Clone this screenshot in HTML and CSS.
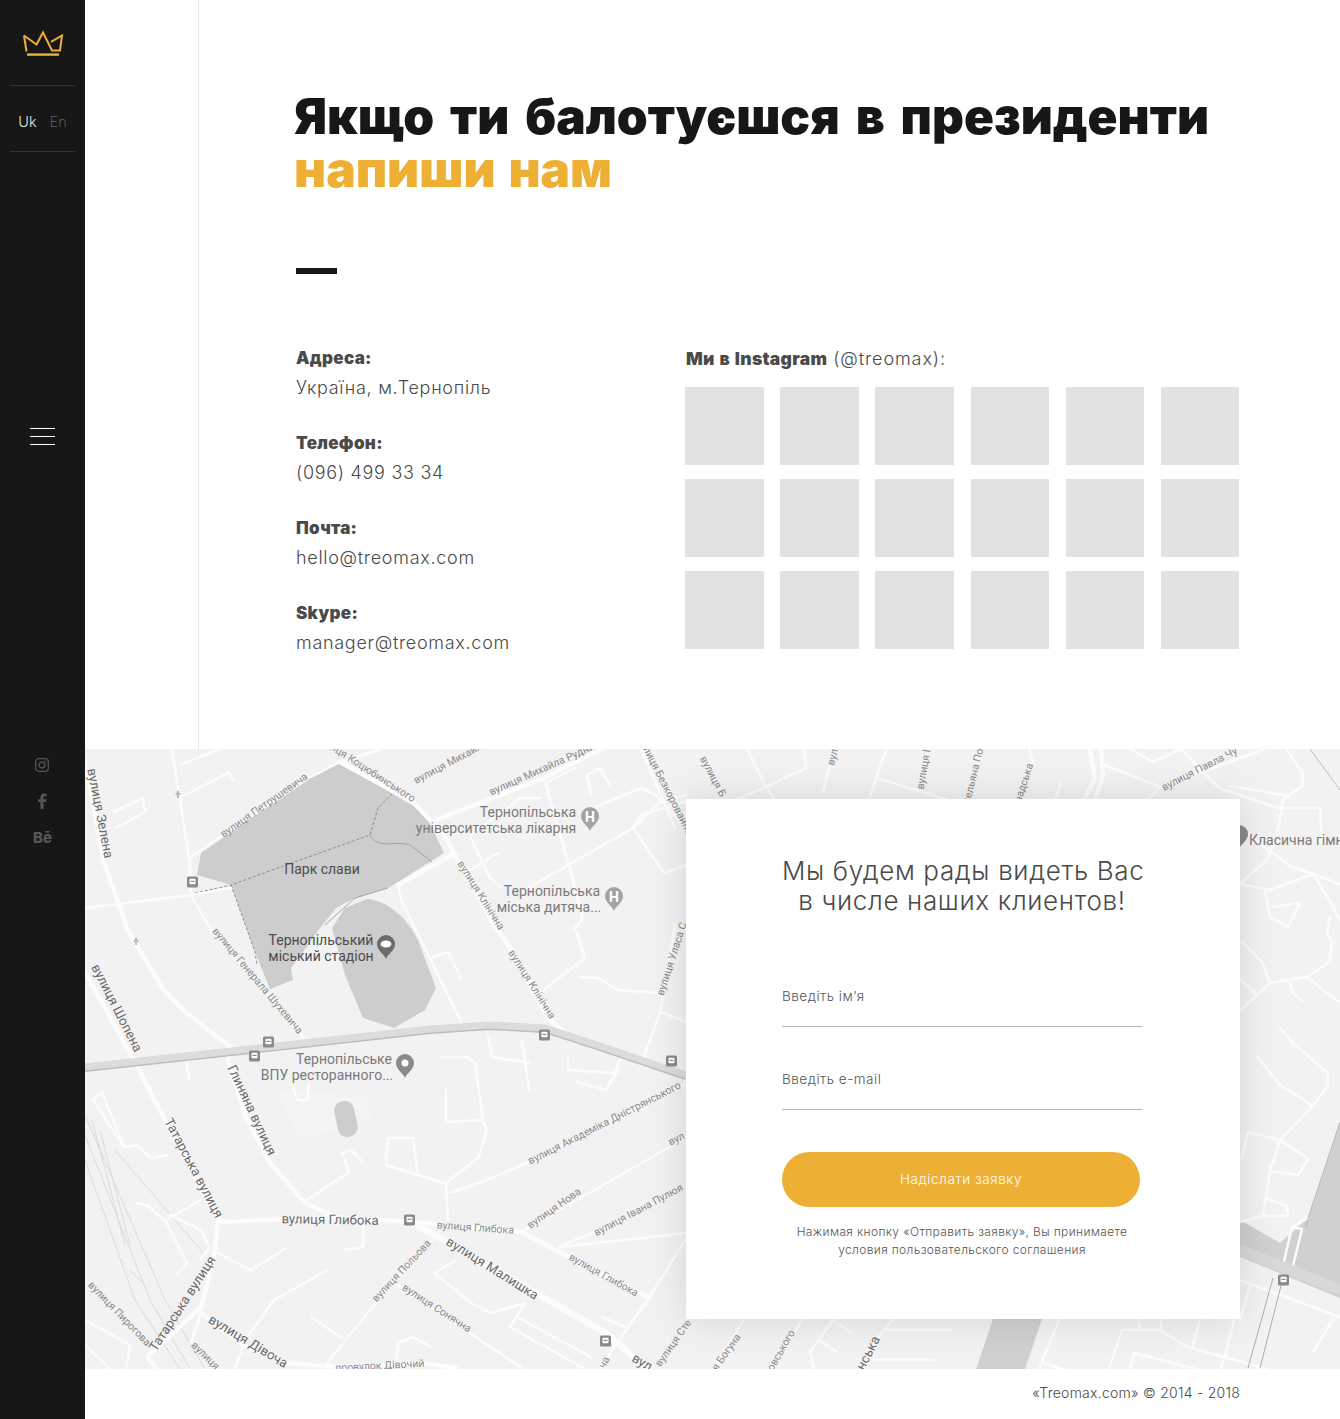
FILE: index.html
```html
<!DOCTYPE html>
<html lang="uk">
<head>
<meta charset="utf-8">
<title>Treomax</title>
<link rel="stylesheet" href="styles.css">
</head>
<body>
<div class="page">
  <aside class="sidebar">
    <div class="logo">
      <svg class="crown" viewBox="22 30 42 27" width="42" height="27" fill="none" stroke="#eeb034" stroke-width="2">
        <path d="M24 35.500 L36.500 44.500 L43 32.500 L52 50.500 H60 L62 35.500 L51 41.800"/>
        <path d="M24 35.500 L26.500 51.500"/>
        <path d="M27 54.600 H59" stroke-width="2.400"/>
      </svg>
    </div>
    <div class="lang"><span class="lang-on">Uk</span><span class="lang-off">En</span></div>
    <button class="burger" aria-label="Меню"><i></i><i></i><i></i></button>
    <div class="social">
      <svg class="soc-ig" viewBox="0 0 14 14" width="14" height="14" fill="none" stroke="#555" stroke-width="1.300"><rect x=".7" y=".7" width="12.600" height="12.600" rx="3.200"/><circle cx="7" cy="7" r="3"/><circle cx="10.600" cy="3.400" r=".6" fill="#555" stroke="none"/></svg>
      <svg class="soc-fb" viewBox="0 0 10 16" width="10" height="16"><path fill="#555" d="M6.500 16V9h2.600l.4-2.800h-3V4.500c0-.8.3-1.300 1.400-1.300h1.600V.7C9.200.6 8.300.5 7.300.5 5 .5 3.500 1.900 3.500 4.200v2H1V9h2.500v7z"/></svg>
      <span class="soc-be">Bē</span>
    </div>
  </aside>

  <main class="main">
    <section class="top">
      <div class="rail"></div>
      <div class="content">
        <h1 class="title">Якщо ти балотуєшся в президенти<br><span class="accent">напиши нам</span></h1>
        <div class="dash"></div>
        <div class="columns">
          <dl class="contacts">
            <div class="contact"><dt>Адреса:</dt><dd>Україна, м.Тернопіль</dd></div>
            <div class="contact"><dt>Телефон:</dt><dd>(096) 499 33 34</dd></div>
            <div class="contact"><dt>Почта:</dt><dd>hello@treomax.com</dd></div>
            <div class="contact"><dt>Skype:</dt><dd>manager@treomax.com</dd></div>
          </dl>
          <div class="insta">
            <p class="insta-title"><b>Ми в Instagram</b> (@treomax):</p>
            <div class="tiles">
              <div class="tile"></div><div class="tile"></div><div class="tile"></div><div class="tile"></div><div class="tile"></div><div class="tile"></div>
              <div class="tile"></div><div class="tile"></div><div class="tile"></div><div class="tile"></div><div class="tile"></div><div class="tile"></div>
              <div class="tile"></div><div class="tile"></div><div class="tile"></div><div class="tile"></div><div class="tile"></div><div class="tile"></div>
            </div>
          </div>
        </div>
      </div>
    </section>

    <section class="map-section">
      <svg class="map" viewBox="85 749 1255 620" width="1255" height="620" xmlns="http://www.w3.org/2000/svg">
        <defs>
          <g id="bus"><rect x="-5.500" y="-5.500" width="11" height="11" rx="1.500" fill="#8a8a8a"/><rect x="-3" y="-3.200" width="6" height="5.500" rx="1" fill="#fff"/><rect x="-2" y="-1.200" width="4" height="1.200" fill="#8a8a8a"/></g>
          <g id="pin"><path d="M0 14 C-1.500 9 -9 6 -9 -1 A9 9 0 1 1 9 -1 C9 6 1.500 9 0 14Z"/></g>
        </defs>
        <rect x="85" y="749" width="1255" height="620" fill="#f2f2f2"/>
        <path d="M275 1090 L365 1095 L372 1120 L300 1140Z" fill="#f4f4f4"/>

        <!-- park areas -->
        <path class="area" d="M340 762 L425 813 L444 853 L398 882 L388 888 L355 898 L336 908 L317 932 L308 945 L291 968 L293 980 L270 989 L255 952 L231 885 L197 875 L201 853 L309 778Z"/>
        <path class="area" d="M367 899 C385 900 405 915 418 940 L436 988 L425 1010 L394 1028 L363 1018 L345 975 L332 928 L345 908Z"/>
        <path class="lawn" d="M1240 1220 L1280 1243 L1308 1218 L1340 1122 V1298 L1240 1257Z"/>
        <path class="lawn" d="M993 1319 H1042 L1025 1369 H976Z"/>
        <rect class="area" x="336" y="1101" width="20" height="36" rx="9" transform="rotate(-12 346 1119)"/>

        <!-- park paths -->
        <g fill="none" stroke="#8f8f8f" stroke-width="1" stroke-dasharray="3 2">
          <path d="M195 893 L231 885 L300 860 L370 835 L378 808 L392 794"/>
          <path d="M231 885 L255 952 L257 965"/>
        </g>
        <path d="M370 835 C378 850 395 840 410 845 L432 862 M388 888 L355 898 L325 925" fill="none" stroke="#a5a5a5"/>

        <!-- railway -->
        <g fill="none" stroke="#d4d4d4" stroke-width=".8">
          <path d="M85 1115 L165 1300 L205 1369 M85 1135 L150 1300 L190 1369 M85 1160 L135 1300 L180 1369 M92 1120 L125 1245 M100 1130 L130 1245 M115 1150 L205 1255 M130 1270 L145 1285"/>
        </g>

        <!-- thin roads, left of the card -->
        <g class="road thin">
          <path d="M172 749 L189 858 L191 895 M180 765 L220 749 M181 797 L228 773 L234 780 M189 858 L309 778 L340 762 L382 749"/>
          <path d="M114 812 L143 798 L145 812 L116 828"/>
          <path d="M85 908 L191 895 L231 888"/>
          <path d="M191 895 L212 932 L260 985 L307 1042"/>
          <path d="M398 885 L402 902 L463 1025"/>
          <path d="M431 958 L448 952 L461 978"/>
          <path d="M467 872 L498 853"/>
          <path d="M471 838 L490 878 L502 888 M471 835 L521 798 L541 798"/>
          <path d="M521 892 L633 828 L660 802 L686 795"/>
          <path d="M544 778 L568 862 L583 918 L575 928 L585 958 L537 995"/>
          <path d="M575 768 L548 782 M587 775 L591 795 M587 775 L600 768 M600 768 L610 785"/>
          <path d="M583 812 L641 788 L656 795 L686 828"/>
          <path d="M633 828 L641 815 L686 801 M633 828 L664 873 L687 865"/>
          <path d="M579 977 L598 978 L618 990 L660 993"/>
          <path d="M660 1012 L641 1065 M660 1012 L687 1022 M675 925 L660 1012"/>
          <path d="M641 749 L675 828"/>
          <path d="M187 1063 L189 1080"/>
          <path d="M93 1100 L102 1092 L124 1147 L137 1145 L151 1158 L168 1155 M93 1100 L124 1147"/>
          <path d="M137 1203 L147 1205 L166 1222 L187 1263 L176 1275"/>
          <path d="M166 1220 L201 1200 M170 1215 L201 1230 L209 1247 L201 1260"/>
          <path d="M218 1253 L251 1270 L286 1248"/>
          <path d="M328 1270 L274 1300 L245 1340 L235 1369"/>
          <path d="M311 1317 L342 1338"/>
          <path d="M432 1240 L378 1300 L324 1367"/>
          <path d="M394 1283 L521 1367"/>
          <path d="M293 1087 L297 1100 L307 1100 L309 1083"/>
          <path d="M363 1162 L351 1150 L342 1153 L349 1172 L307 1200"/>
          <path d="M442 1057 L467 1057 L475 1063 L483 1120 L487 1130 L479 1157 L446 1183 L448 1220"/>
          <path d="M446 1090 L446 1122 L481 1120"/>
          <path d="M417 1170 L413 1138 L388 1138 L386 1165 L444 1183"/>
          <path d="M450 1193 L487 1180 L533 1160 L687 1083"/>
          <path d="M521 1232 L687 1137"/>
          <path d="M560 1247 L687 1233 M562 1245 L626 1220"/>
          <path d="M649 1298 L687 1237 M649 1298 L614 1347 L600 1369"/>
          <path d="M602 1317 L625 1327"/>
          <path d="M456 1260 L434 1273 L471 1303 L490 1313 L525 1303 L510 1327 L587 1370 M517 1317 L591 1357"/>
          <path d="M396 1367 L398 1343 L413 1337 L431 1347"/>
          <path d="M363 1227 L363 1247 L344 1250"/>
          <path d="M568 1057 L568 1070 L614 1073 L622 1057 M577 1082 L606 1090 L618 1070"/>
          <path d="M488 1035 L492 1057 L529 1063 M522 1040 L529 1090"/>
          <path d="M191 1343 L201 1313"/>
          <path d="M85 1320 L130 1345 L126 1369 M85 1345 L110 1369"/>
        </g>

        <!-- thin roads, right of and under the card -->
        <g class="road thin">
          <path d="M747 749 L766 787 L806 768 L804 749 M766 787 L735 800 M766 787 L775 800"/>
          <path d="M829 768 L823 792"/>
          <path d="M886 749 L876 778 L949 800 M876 778 L869 800"/>
          <path d="M1029 749 L1033 762"/>
          <path d="M1061 782 L1055 800"/>
          <path d="M1105 765 L1160 787 L1265 749 M1160 787 L1148 800"/>
          <path d="M1130 749 L1153 762 L1181 749"/>
          <path d="M1181 749 L1219 788 L1278 808 L1320 808 L1322 843"/>
          <path d="M1230 786 L1290 796"/>
          <path d="M1287 750 L1303 774 L1302 786 L1283 800 L1277 835 L1267 860 L1240 884"/>
          <path d="M1240 829 L1290 866 L1313 874 L1340 884"/>
          <path d="M1240 884 L1270 890 L1313 874"/>
          <path d="M1265 890 L1270 917 L1288 927 L1300 903 L1273 907"/>
          <path d="M1313 874 L1330 901 L1340 921 M1330 917 L1327 933 L1332 942 L1330 962 L1307 977 L1270 983 L1240 1011"/>
          <path d="M1242 942 L1262 962 L1270 983"/>
          <path d="M1240 979 L1257 995"/>
          <path d="M1290 983 L1293 993 L1302 1001"/>
          <path d="M1307 977 L1340 1003"/>
          <path d="M1280 1028 L1290 1040 L1328 1073 L1328 1085 L1313 1106 L1280 1085 L1257 1056"/>
          <path d="M1313 1106 L1280 1140 L1270 1171 L1263 1216 L1240 1222"/>
          <path d="M1280 1140 L1248 1132 L1242 1159"/>
          <path d="M1270 1171 L1298 1175 L1308 1159 L1280 1140"/>
          <path d="M1265 1198 L1287 1206 L1288 1216 L1263 1216"/>
          <path d="M1308 1218 L1292 1227 M1292 1227 L1282 1270 L1292 1270 L1302 1229Z"/>
          <path d="M1250 1286 L1240 1320 M1333 1319 L1313 1352 M1240 1280 L1340 1317"/>
          <path d="M744 1320 L723 1353 L715 1369"/>
          <path d="M802 1320 L773 1369"/>
          <path d="M833 1320 L810 1352 L814 1369 M833 1320 L850 1332 M819 1340 L837 1352"/>
          <path d="M893 1320 L881 1333 L864 1369 M885 1330 L951 1330 M873 1360 L933 1360"/>
          <path d="M1059 1320 L1039 1369"/>
          <path d="M1109 1369 L1122 1330 L1159 1330 L1188 1347 L1246 1363 L1267 1369"/>
          <path d="M1138 1320 L1140 1330 M1161 1320 L1161 1330"/>
          <path d="M1200 1320 L1192 1348"/>
          <path d="M1234 1320 L1225 1357 L1220 1369"/>
          <path d="M1134 1353 L1130 1369 M1134 1353 L1196 1369"/>
          <path d="M1043 1363 L1063 1369"/>
        </g>

        <!-- main roads -->
        <g class="road mid">
          <path d="M85 762 L104 862 L127 928 L162 988 L185 1012 L232 1048 L228 1060 L245 1115 L270 1163 L305 1203 L336 1217 L409 1222 L521 1232 L649 1298"/>
          <path d="M85 972 L135 1062 L158 1107 L218 1218 L214 1257 L201 1307 L147 1357 L158 1370"/>
          <path d="M218 1222 L336 1217"/>
          <path d="M201 1313 L247 1347 L286 1363 L340 1367 L421 1363 L456 1368"/>
          <path class="wide" d="M413 1223 L606 1333 L645 1367"/>
          <path d="M340 762 L413 802 L444 835 L494 925 L510 948 L548 1018 L564 1032"/>
          <path d="M398 885 L452 855 M436 820 L544 778 L602 749"/>
          <path d="M1090 749 L1095 778 L1084 800"/>
          <path d="M1101 749 L1103 775 L1095 800"/>
        </g>

        <!-- highway band -->
        <path d="M85 1068 L250 1050 L430 1030 L490 1026 L545 1029 L600 1047 L686 1076" fill="none" stroke="#bdbdbd" stroke-width="8"/>
        <path d="M85 1067 L250 1049 L430 1029 L490 1025 L545 1028 L600 1046 L686 1075" fill="none" stroke="#dcdcdc" stroke-width="7"/>
        <path d="M1240 1250 L1340 1290" fill="none" stroke="#d8d8d8" stroke-width="11"/>
        <path d="M1273 1278 L1248 1368 M1283 1278 L1260 1368" fill="none" stroke="#9a9a9a" stroke-width=".8"/>
        <path d="M1310 749 L1340 790 M1340 1122 L1308 1218 L1306 1228" fill="none" stroke="#b0b0b0" stroke-width=".8"/>

        <!-- bus stops -->
        <use href="#bus" x="192.500" y="882"/><use href="#bus" x="268.500" y="1042"/><use href="#bus" x="254.500" y="1056"/>
        <use href="#bus" x="544.500" y="1035"/><use href="#bus" x="671.500" y="1061"/><use href="#bus" x="409.500" y="1220"/>
        <use href="#bus" x="605.500" y="1341"/><use href="#bus" x="1283.500" y="1280"/>

        <!-- arrows -->
        <path d="M178 790 l-3 5 h2 v3 h2 v-3 h2z M136 937 l-3 5 h2 v3 h2 v-3 h2z" fill="#bcbcbc"/>

        <!-- POI pins -->
        <use class="pin-soft" href="#pin" x="590" y="817"/><text class="pin-h" x="590" y="822">H</text>
        <use class="pin-soft" href="#pin" x="614" y="897"/><text class="pin-h" x="614" y="902">H</text>
        <use class="pin-dark" href="#pin" x="386" y="945"/><ellipse cx="386" cy="944" rx="5.500" ry="3.500" fill="#fff"/>
        <use class="pin-mid" href="#pin" x="405" y="1064"/><circle cx="405" cy="1063" r="3.500" fill="#fff"/>
        <use class="pin-mid" href="#pin" x="1239" y="835"/>

        <!-- POI labels -->
        <g class="poi">
          <text x="528" y="817" text-anchor="middle">Тернопільська</text>
          <text x="496" y="833" text-anchor="middle">університетська лікарня</text>
          <text x="552" y="896" text-anchor="middle">Тернопільська</text>
          <text x="549" y="912" text-anchor="middle">міська дитяча...</text>
          <text class="dark" x="322" y="874" text-anchor="middle">Парк слави</text>
          <text class="dark" x="321" y="945" text-anchor="middle">Тернопільський</text>
          <text class="dark" x="321" y="961" text-anchor="middle">міський стадіон</text>
          <text x="344" y="1064" text-anchor="middle">Тернопільське</text>
          <text x="327" y="1080" text-anchor="middle">ВПУ ресторанного...</text>
          <text x="1249" y="845">Класична гімн</text>
        </g>

        <!-- streets -->
        <g class="st big">
          <text transform="translate(96 814) rotate(79)">вулиця Зелена</text>
          <text transform="translate(113 1010) rotate(63)">вулиця Шопена</text>
          <text transform="translate(248 1112) rotate(65)">Глиняна вулиця</text>
          <text transform="translate(190 1170) rotate(62)">Татарська вулиця</text>
          <text transform="translate(186 1306) rotate(-57)">Татарська вулиця</text>
          <text transform="translate(246 1345) rotate(31)">вулиця Дівоча</text>
          <text transform="translate(330 1224) rotate(1)">вулиця Глибока</text>
          <text transform="translate(490 1272) rotate(32)">вулиця Малишка</text>
          <text transform="translate(640 1366) rotate(30)">вул</text>
          <text transform="translate(872 1355) rotate(-63)">нська</text>
        </g>
        <g class="st">
          <text transform="translate(266 808) rotate(-35)">вулиця Петрушевича</text>
          <text transform="translate(364 771) rotate(33)">вулиця Коцюбинського</text>
          <text transform="translate(452 765) rotate(-28)">вулиця Михайла</text>
          <text transform="translate(546 771) rotate(-24)">вулиця Михайла Рудниц</text>
          <text transform="translate(665 792) rotate(63)">вулиця Безкоровайного</text>
          <text transform="translate(478 897) rotate(58)">вулиця Клінічна</text>
          <text transform="translate(529 986) rotate(58)">вулиця Клінічна</text>
          <text transform="translate(255 983) rotate(50)">вулиця Генерала Шухевича</text>
          <text transform="translate(675 960) rotate(-72)">вулиця Уласа С</text>
          <text transform="translate(117 1316) rotate(46)">вулиця Пирогова</text>
          <text transform="translate(203 1358) rotate(45)">вулиця</text>
          <text transform="translate(380 1369) rotate(-3)">провулок Дівочий</text>
          <text transform="translate(404 1273) rotate(-47)">вулиця Польова</text>
          <text transform="translate(435 1311) rotate(33)">вулиця Сонячна</text>
          <text transform="translate(475 1231) rotate(4)">вулиця Глибока</text>
          <text transform="translate(602 1278) rotate(29)">вулиця Глибока</text>
          <text transform="translate(556 1211) rotate(-35)">вулиця Нова</text>
          <text transform="translate(640 1213) rotate(-28)">вулиця Івана Пулюя</text>
          <text transform="translate(606 1126) rotate(-27)">вулиця Академіка Дністрянського</text>
          <text transform="translate(678 1142) rotate(-27)">вул</text>
          <text transform="translate(676 1345) rotate(-55)">вулиця Сте</text>
          <text transform="translate(607 1364) rotate(-60)">ча</text>
          <text transform="translate(729 1354) rotate(-55)">я Богуна</text>
          <text transform="translate(784 1352) rotate(-60)">овського</text>
          <text transform="translate(710 778) rotate(62)">вулиця Б</text>
          <text transform="translate(836 758) rotate(-75)">вул</text>
          <text transform="translate(927 770) rotate(-80)">вулиця І</text>
          <text transform="translate(977 775) rotate(-76)">мельяна Пол</text>
          <text transform="translate(1027 784) rotate(-72)">надська</text>
          <text transform="translate(1201 772) rotate(-27)">вулиця Павла Чу</text>
        </g>
      </svg>

      <form class="card">
        <h2 class="card-title">Мы будем рады видеть Вас<br>в числе наших клиентов!</h2>
        <div class="field">Введіть ім’я</div>
        <div class="field">Введіть e-mail</div>
        <button class="send" type="button">Надіслати заявку</button>
        <p class="note">Нажимая кнопку «Отправить заявку», Вы принимаете<br>условия пользовательского соглашения</p>
      </form>
    </section>

    <footer class="footer">«Treomax.com» © 2014 - 2018</footer>
  </main>
</div>
</body>
</html>
```

FILE: styles.css
```css
* { box-sizing: border-box; }
html, body { margin: 0; padding: 0; background: #fff; }
body { font-family: "Inter", "Liberation Sans", sans-serif; color: #4a4a4a; }

.page { display: flex; width: 1340px; min-height: 1419px; overflow: hidden; }

/* sidebar */
.sidebar { width: 85px; flex: none; background: #171717; display: flex; flex-direction: column; align-items: center; }
.logo { width: 65px; height: 86px; padding-top: 30px; display: flex; justify-content: center; align-items: flex-start; border-bottom: 1px solid #333; }
.crown { display: block; }
.lang { width: 65px; height: 66px; display: flex; align-items: center; justify-content: center; gap: 13px; border-bottom: 1px solid #333; font-size: 14.5px; font-weight: 300; padding-top: 5px; }
.lang-on { color: #e4e4e4; }
.lang-off { color: #555; }
.burger { margin: 276px 0 0; padding: 0; border: 0; background: none; width: 25px; display: flex; flex-direction: column; gap: 7px; }
.burger i { display: block; height: 1px; background: #fff; }
.social { margin-top: 313px; display: flex; flex-direction: column; align-items: center; }
.soc-ig { display: block; }
.soc-fb { display: block; margin-top: 21px; }
.soc-be { margin-top: 19px; font-size: 15px; line-height: 20px; font-weight: 800; color: #555; }

/* main */
.main { flex: 1; min-width: 0; display: flex; flex-direction: column; }
.top { height: 749px; display: flex; }
.rail { width: 114px; flex: none; border-right: 1px solid #e6e6e6; }
.content { flex: 1; padding: 90px 0 0 96px; }
.title { margin: 0 0 0 -1px; font-size: 49.5px; line-height: 53px; font-weight: 900; color: #171717; white-space: nowrap; word-spacing: 6px; }
.accent { color: #eeb034; word-spacing: 3px; }
.dash { width: 41px; height: 6px; margin: 72px 0 0 1px; background: #171717; }

.columns { display: flex; margin-top: 69px; padding-left: 1px; }
.contacts { margin: 0; width: 389px; flex: none; }
.contact { height: 85px; }
.contact dt { font-size: 17px; line-height: 30px; font-weight: 900; color: #4a4a4a; letter-spacing: .3px; }
.contact dd { margin: 0; font-size: 18px; line-height: 30px; font-weight: 300; color: #4a4a4a; letter-spacing: .7px; }

.insta { width: 554px; }
.insta-title { margin: 1px 0 13px 1px; font-size: 18px; line-height: 30px; font-weight: 300; letter-spacing: .9px; }
.insta-title b { font-weight: 900; font-size: 17.5px; letter-spacing: .3px; word-spacing: 1px; }
.tiles { display: grid; grid-template-columns: repeat(6, 78.5px); grid-auto-rows: 78px; column-gap: 16.7px; row-gap: 14px; }
.tile { background: #e2e2e2; }

/* map */
.map-section { position: relative; height: 620px; overflow: hidden; }
.map { display: block; }
.area { fill: #cdcdcd; }
.lawn { fill: #d0d0d0; }
.road { fill: none; stroke: #fcfcfc; stroke-linejoin: round; stroke-linecap: round; }
.thin { stroke-width: 2.5; }
.mid { stroke-width: 4.5; }
.wide { stroke-width: 6.5; }
.pin-soft { fill: #a3a3a3; }
.pin-mid { fill: #8a8a8a; }
.pin-dark { fill: #6b6b6b; }
.poi text { font-family: "Roboto", sans-serif; font-size: 14px; fill: #7a7a7a; }
.poi text.dark { fill: #4c4c4c; }
.pin-h { font-family: "Roboto", sans-serif; font-size: 14px; font-weight: 700; fill: #fff; text-anchor: middle; }
.st text { font-family: "Roboto", sans-serif; font-size: 10.5px; fill: #8a8a8a; text-anchor: middle; }
.st.big text { font-size: 13.2px; fill: #6a6a6a; }

.card { position: absolute; left: 601px; top: 50px; width: 554px; height: 520px; background: #fff; box-shadow: 0 0 36px rgba(0,0,0,.13); padding: 57px 98px 0 96px; }
.card-title { margin: 0 0 49px; text-align: center; font-size: 26px; line-height: 30px; font-weight: 300; color: #4a4a4a; letter-spacing: .65px; white-space: nowrap; }
.field { height: 62px; margin-bottom: 21px; padding-top: 21px; border-bottom: 1px solid #b5b5b5; font-size: 13.5px; line-height: 20px; font-weight: 300; color: #555; letter-spacing: .5px; }
.send { display: block; width: 358px; height: 55px; margin-top: 42px; padding: 0 0 2px; border: 0; border-radius: 28px; background: #eeb034; color: #fff; font: 300 13.5px/20px "Inter", "Liberation Sans", sans-serif; letter-spacing: .6px; }
.note { margin: 16px 0 0; width: 360px; text-align: center; font-size: 12px; line-height: 18px; font-weight: 300; color: #555; letter-spacing: .36px; white-space: nowrap; }

.footer { height: 50px; padding: 14px 100px 0 0; text-align: right; font-size: 14px; line-height: 20px; font-weight: 300; color: #4a4a4a; letter-spacing: .25px; }
```
